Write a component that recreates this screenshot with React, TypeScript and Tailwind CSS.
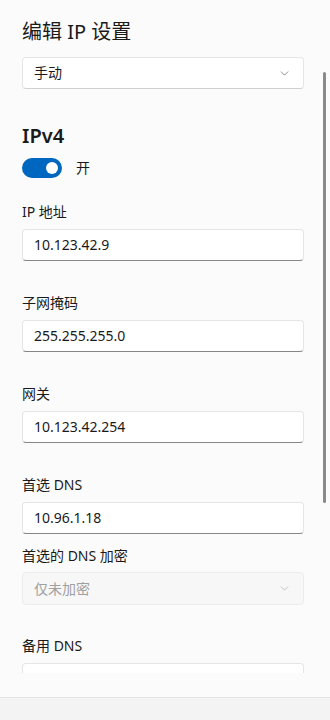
import { ChevronDown } from "lucide-react";

const font = { fontFamily: '"Noto Sans", "Noto Sans CJK SC", sans-serif' };

function Field({ value }: { value: string }) {
  return (
    <div className="flex h-[32px] w-[282px] shrink-0 items-center rounded-[4px] border border-[#e5e5e5] border-b-[#868686] bg-white pl-[11px] text-[14px] leading-[20px] text-[#1a1a1a]">
      {value}
    </div>
  );
}

function Label({ text }: { text: string }) {
  return (
    <div className="flex h-[20px] shrink-0 items-center overflow-visible text-[14px] leading-[20px] whitespace-nowrap text-[#1a1a1a]">
      {text}
    </div>
  );
}

export default function App() {
  return (
    <div className="flex h-[720px] w-[330px] flex-col bg-[#fbfbfb]" style={font}>
      <div className="relative h-[673px] shrink-0 overflow-hidden">
        <div className="absolute right-[4px] top-[72px] h-[431px] w-[3px] rounded-full bg-[#8a8a8a]" />
        <div className="flex flex-col pl-[22px] pt-[18px]">
          <h1 className="flex h-[28px] shrink-0 items-center text-[20px] leading-[28px] font-normal text-[#1a1a1a]">
            编辑 IP 设置
          </h1>
          <div className="mt-[11px] flex h-[32px] w-[282px] shrink-0 items-center justify-between rounded-[4px] border border-[#e5e5e5] border-b-[#d0d0d0] bg-white pl-[11px] pr-[12px] text-[14px] leading-[20px] text-[#1a1a1a]">
            <span>手动</span>
            <ChevronDown size={13} strokeWidth={1.3} className="text-[#5f5f5f]" />
          </div>
          <h2 className="mt-[33px] flex h-[28px] shrink-0 items-center text-[20px] leading-[28px] font-semibold text-[#1a1a1a]">
            IPv4
          </h2>
          <div className="mt-[8px] flex h-[20px] shrink-0 items-center gap-[14px]">
            <div className="flex h-[20px] w-[40px] items-center justify-end rounded-full bg-[#0067c0] pr-[4px]">
              <div className="h-[12px] w-[12px] rounded-full bg-white" />
            </div>
            <span className="text-[14px] leading-[20px] text-[#1a1a1a]">开</span>
          </div>
          <div className="mt-[24px]">
            <Label text="IP 地址" />
          </div>
          <div className="mt-[7px]">
            <Field value="10.123.42.9" />
          </div>
          <div className="mt-[32px]">
            <Label text="子网掩码" />
          </div>
          <div className="mt-[7px]">
            <Field value="255.255.255.0" />
          </div>
          <div className="mt-[32px]">
            <Label text="网关" />
          </div>
          <div className="mt-[7px]">
            <Field value="10.123.42.254" />
          </div>
          <div className="mt-[32px]">
            <Label text="首选 DNS" />
          </div>
          <div className="mt-[7px]">
            <Field value="10.96.1.18" />
          </div>
          <div className="mt-[12px]">
            <Label text="首选的 DNS 加密" />
          </div>
          <div className="mt-[6px] flex h-[33px] w-[282px] shrink-0 items-center justify-between rounded-[4px] border border-[#ececec] bg-[#f7f7f7] pl-[11px] pr-[12px] text-[14px] leading-[20px] text-[#a0a0a0]">
            <span>仅未加密</span>
            <ChevronDown size={13} strokeWidth={1.3} className="text-[#b0b0b0]" />
          </div>
          <div className="mt-[31px]">
            <Label text="备用 DNS" />
          </div>
          <div className="mt-[7px]">
            <Field value="" />
          </div>
        </div>
      </div>
      <div className="h-[24px] shrink-0 bg-[#fbfbfb]" />
      <div className="flex-1 border-t border-[#e5e5e5] bg-[#f3f3f3]" />
    </div>
  );
}
